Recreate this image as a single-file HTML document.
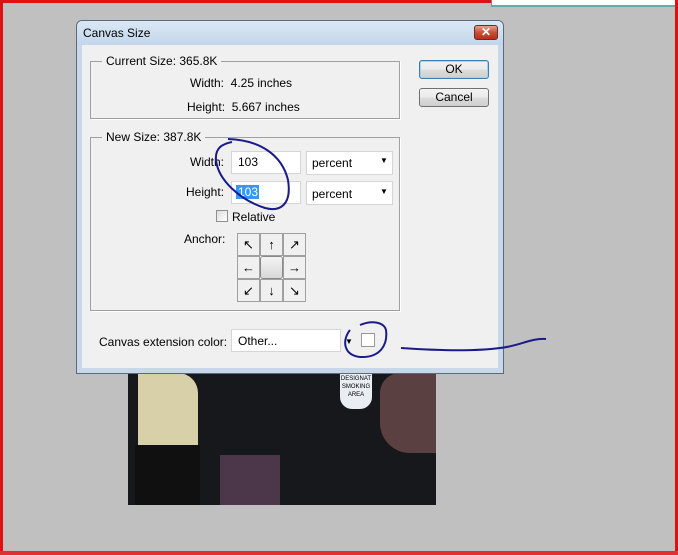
<!DOCTYPE html>
<html><head><style>
*{margin:0;padding:0;box-sizing:border-box}
body{width:678px;height:555px;background:#c0c0c0;position:relative;overflow:hidden;font-family:"Liberation Sans",Tahoma,sans-serif;font-size:12px;color:#000}
.a{position:absolute}
.t{position:absolute;white-space:nowrap}
.grp{position:absolute;border:1px solid #a0a0a0;box-shadow:1px 1px 0 #fff}
.btn{position:absolute;border:1px solid #707070;border-radius:3px;background:linear-gradient(#f2f2f2,#ebebeb 50%,#dddddd 51%,#cfcfcf);text-align:center;font-size:12px;line-height:16px}
.inp{position:absolute;background:#fff;border:1px solid #d5d5d5;}
.cell{position:absolute;width:23px;height:23px;border:1px solid #a0a0a0;background:#f0f0f0;text-align:center;font-size:13px;line-height:21px;}
</style></head><body>
<div class="a" style="left:0;top:0;width:678px;height:3px;background:#e01010"></div>
<div class="a" style="left:0;top:0;width:3px;height:555px;background:#e01010"></div>
<div class="a" style="right:0;top:0;width:3px;height:555px;background:#e01010"></div>
<div class="a" style="left:0;bottom:0;width:678px;height:4px;background:#e03030"></div>
<div class="a" style="left:491px;top:0;width:184px;height:7px;background:#fff;border-left:1px solid #888;border-bottom:2px solid #6aa"></div>

<!-- photo -->
<div class="a" style="left:128px;top:373px;width:308px;height:132px;background:#17181c"></div>
<div class="a" style="left:138px;top:373px;width:60px;height:85px;background:#d8d0a8;border-radius:0 20px 10px 10px"></div>
<div class="a" style="left:135px;top:445px;width:65px;height:60px;background:#101010"></div>
<div class="a" style="left:220px;top:455px;width:60px;height:50px;background:#5a3e55;opacity:.8"></div>
<div class="a" style="left:380px;top:373px;width:56px;height:80px;background:#5a4040;border-radius:20px 0 0 30px"></div>
<div class="a" style="left:340px;top:373px;width:32px;height:36px;background:#e8eef2;border-radius:0 0 12px 12px;font-size:6px;text-align:center;line-height:8px;padding-top:2px">DESIGNAT SMOKING AREA</div>

<!-- dialog -->
<div class="a" style="left:76px;top:20px;width:428px;height:354px;background:#c8d8e8;border:1px solid #5a6a7a;border-radius:6px 6px 0 0"></div>
<div class="a" style="left:77px;top:21px;width:426px;height:24px;background:linear-gradient(#dbe8f5,#c3d6ea);border-radius:5px 5px 0 0"></div>
<div class="t" style="left:83px;top:26px;font-size:12px">Canvas Size</div>
<div class="a" style="left:474px;top:25px;width:24px;height:15px;border:1px solid #6b2b20;border-radius:3px;background:linear-gradient(#e8a090,#c8503a 50%,#b83018);color:#fff;font-weight:bold;text-align:center;line-height:13px;font-size:12px">✕</div>
<div class="a" style="left:82px;top:45px;width:416px;height:323px;background:#f0f0f0"></div>

<div class="grp" style="left:90px;top:61px;width:310px;height:58px"></div>
<div class="t" style="left:102px;top:54px;background:#f0f0f0;padding:0 4px">Current Size: 365.8K</div>
<div class="t" style="left:190px;top:76px">Width:&nbsp; 4.25 inches</div>
<div class="t" style="left:187px;top:100px">Height:&nbsp; 5.667 inches</div>

<div class="btn" style="left:419px;top:60px;width:70px;height:19px;border-color:#3c7fb1;box-shadow:inset 0 0 0 1px #9ed4f0">OK</div>
<div class="btn" style="left:419px;top:88px;width:70px;height:19px">Cancel</div>

<div class="grp" style="left:90px;top:137px;width:310px;height:174px"></div>
<div class="t" style="left:102px;top:130px;background:#f0f0f0;padding:0 4px">New Size: 387.8K</div>
<div class="t" style="left:190px;top:155px">Width:</div>
<div class="inp" style="left:231px;top:151px;width:70px;height:23px"></div>
<div class="t" style="left:238px;top:155px">103</div>
<div class="inp" style="left:306px;top:151px;width:87px;height:24px"></div>
<div class="t" style="left:312px;top:156px">percent</div>
<div class="t" style="left:380px;top:156px;font-size:8px">▼</div>
<div class="t" style="left:186px;top:185px">Height:</div>
<div class="inp" style="left:231px;top:181px;width:70px;height:23px"></div>
<div class="a" style="left:236px;top:185px;width:23px;height:14px;background:#3399ff"></div>
<div class="t" style="left:238px;top:185px;color:#fff">103</div>
<div class="inp" style="left:306px;top:181px;width:87px;height:24px"></div>
<div class="t" style="left:312px;top:187px">percent</div>
<div class="t" style="left:380px;top:187px;font-size:8px">▼</div>
<div class="a" style="left:216px;top:210px;width:12px;height:12px;border:1px solid #8e8f8f;background:linear-gradient(135deg,#ddd,#fff)"></div>
<div class="t" style="left:232px;top:210px">Relative</div>
<div class="t" style="left:184px;top:232px">Anchor:</div>
<div class="cell" style="left:237px;top:233px">↖</div>
<div class="cell" style="left:260px;top:233px">↑</div>
<div class="cell" style="left:283px;top:233px">↗</div>
<div class="cell" style="left:237px;top:256px">←</div>
<div class="a" style="left:260px;top:256px;width:23px;height:23px;border:1px solid #888;border-radius:3px;background:linear-gradient(#f4f4f4,#d8d8d8)"></div>
<div class="cell" style="left:283px;top:256px">→</div>
<div class="cell" style="left:237px;top:279px">↙</div>
<div class="cell" style="left:260px;top:279px">↓</div>
<div class="cell" style="left:283px;top:279px">↘</div>

<div class="t" style="left:99px;top:335px">Canvas extension color:</div>
<div class="inp" style="left:231px;top:329px;width:110px;height:23px"></div>
<div class="t" style="left:238px;top:334px">Other...</div>
<div class="t" style="left:345px;top:337px;font-size:8px">▼</div>
<div class="a" style="left:361px;top:333px;width:14px;height:14px;border:1px solid #999;background:#fff"></div>

<!-- pen marks -->
<svg class="a" style="left:0;top:0" width="678" height="555">
<g fill="none" stroke="#1a1a8a" stroke-width="2">
<path d="M228 139 C260 140 282 155 288 180 C292 205 280 212 265 208 C240 200 218 180 216 160 C215 148 222 144 232 142"/>
<path d="M350 330 C342 340 343 355 360 357 C380 358 388 345 386 330 C384 322 372 320 360 325"/>
<path d="M401 348 C430 350 470 352 500 348 C520 346 530 338 546 339"/>
</g></svg>
</body></html>
